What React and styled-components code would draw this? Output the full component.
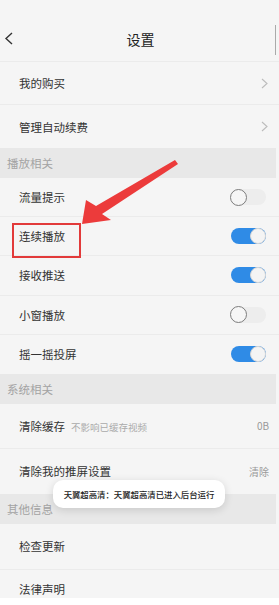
import React from "react";
import styled, { createGlobalStyle } from "styled-components";

const GlobalStyle = createGlobalStyle`
  html, body {
    margin: 0;
    padding: 0;
    background: #ffffff;
  }
  * {
    box-sizing: border-box;
  }
`;

const Page = styled.div`
  position: relative;
  width: 279px;
  height: 605px;
  display: flex;
  flex-direction: column;
  font-family: "Noto Sans CJK SC", "Noto Sans", sans-serif;
  color: #333;
  overflow: hidden;
`;

const Scroll = styled.div`
  flex: 1;
  overflow: hidden;
  background: #f5f5f5;
`;

const Footer = styled.div`
  height: 7px;
  background: #ffffff;
`;

const Header = styled.div`
  height: 62px;
  padding-top: 17px;
  display: flex;
  align-items: center;
  justify-content: center;
  position: relative;
  border-bottom: 1px solid #ebebeb;
`;

const Back = styled.svg`
  position: absolute;
  left: 4px;
  top: 32px;
  width: 10px;
  height: 13px;
`;

const Title = styled.div`
  font-size: 14px;
  color: #222;
  margin-left: 2px;
`;

const ScrollBar = styled.div`
  position: absolute;
  right: 3px;
  top: 25px;
  width: 1px;
  height: 30px;
  background: #aaa;
`;

const Row = styled.div`
  height: ${p => p.$h}px;
  display: flex;
  align-items: center;
  padding: 0 9px 0 19px;
  border-bottom: ${p => (p.$last ? "none" : "1px solid #ebebeb")};
`;

const Label = styled.span`
  font-size: 11.5px;
  color: #333;
  flex: 1;
  display: flex;
  align-items: baseline;
`;

const Sub = styled.span`
  font-size: 9.5px;
  color: #aaa;
  margin-left: 6px;
`;

const Value = styled.span`
  font-size: 10px;
  color: #9a9a9a;
  margin-right: 1px;
`;

const Section = styled.div`
  height: 30px;
  margin-right: 3px;
  display: flex;
  align-items: center;
  padding-left: 7px;
  font-size: 11.5px;
  color: #a3a3a3;
  background: #e8e8e8;
`;

const Chevron = styled.svg`
  width: 7px;
  height: 11px;
  margin-right: 2px;
`;

const Track = styled.div`
  width: 35px;
  height: 16px;
  border-radius: 8px;
  margin-right: 4px;
  background: ${p => (p.$on ? "#2f8be6" : "#ededed")};
  display: flex;
  align-items: center;
  justify-content: ${p => (p.$on ? "flex-end" : "flex-start")};
`;

const Knob = styled.div`
  width: ${p => (p.$on ? 16 : 17)}px;
  height: ${p => (p.$on ? 16 : 17)}px;
  border-radius: 50%;
  background: ${p => (p.$on ? "#f4f4f4" : "#f6f6f6")};
  border: 1px solid ${p => (p.$on ? "#d6d6d6" : "#7d7d7d")};
  margin: ${p => (p.$on ? "0" : "0 0 0 -1px")};
`;

const Toast = styled.div`
  position: absolute;
  left: 53px;
  top: 480px;
  width: 172px;
  height: 28px;
  border-radius: 10px;
  background: #ffffff;
  box-shadow: 0 2px 8px rgba(0, 0, 0, 0.14);
  display: flex;
  align-items: center;
  justify-content: center;
  font-size: 8.4px;
  font-weight: 500;
  color: #222;
  white-space: nowrap;
`;

const Mark = styled.div`
  position: absolute;
  left: 12px;
  top: 223px;
  width: 69px;
  height: 35px;
  border: 2px solid #e23a3a;
`;

const Arrow = styled.svg`
  position: absolute;
  left: 0;
  top: 0;
  width: 279px;
  height: 605px;
  pointer-events: none;
`;

const Switch = ({ on }) => (
  <Track $on={on}>
    <Knob $on={on} />
  </Track>
);

const More = () => (
  <Chevron viewBox="0 0 7 11">
    <path d="M1 1 L6 5.5 L1 10" fill="none" stroke="#bcbcbc" strokeWidth="1.1" />
  </Chevron>
);

const playItems = [
  { name: "流量提示", on: false },
  { name: "连续播放", on: true },
  { name: "接收推送", on: true },
  { name: "小窗播放", on: false },
  { name: "摇一摇投屏", on: true },
];

export default function App() {
  return (
    <>
      <GlobalStyle />
      <Page>
        <Scroll>
          <Header>
            <Back viewBox="0 0 10 13">
              <path d="M8 1 L2 6.5 L8 12" fill="none" stroke="#333" strokeWidth="1.4" />
            </Back>
            <Title>设置</Title>
          </Header>
          <Row $h={43}>
            <Label>我的购买</Label>
            <More />
          </Row>
          <Row $h={43} $last>
            <Label>管理自动续费</Label>
            <More />
          </Row>
          <Section>播放相关</Section>
          {playItems.map((it, i) => (
            <Row key={it.name} $h={39.2} $last={i === playItems.length - 1}>
              <Label>{it.name}</Label>
              <Switch on={it.on} />
            </Row>
          ))}
          <Section>系统相关</Section>
          <Row $h={45}>
            <Label>
              清除缓存<Sub>不影响已缓存视频</Sub>
            </Label>
            <Value>0B</Value>
          </Row>
          <Row $h={45} $last>
            <Label>清除我的推屏设置</Label>
            <Value>清除</Value>
          </Row>
          <Section>其他信息</Section>
          <Row $h={46}>
            <Label>检查更新</Label>
          </Row>
          <Row $h={38} $last>
            <Label>法律声明</Label>
          </Row>
        </Scroll>
        <Footer />
        <ScrollBar />
        <Mark />
        <Arrow viewBox="0 0 279 605">
          <polygon
            points="82,224 86,200 96,206 175,160 178,164 102,214 111,220"
            fill="#ec3b3b"
          />
        </Arrow>
        <Toast>天翼超高清：天翼超高清已进入后台运行</Toast>
      </Page>
    </>
  );
}
